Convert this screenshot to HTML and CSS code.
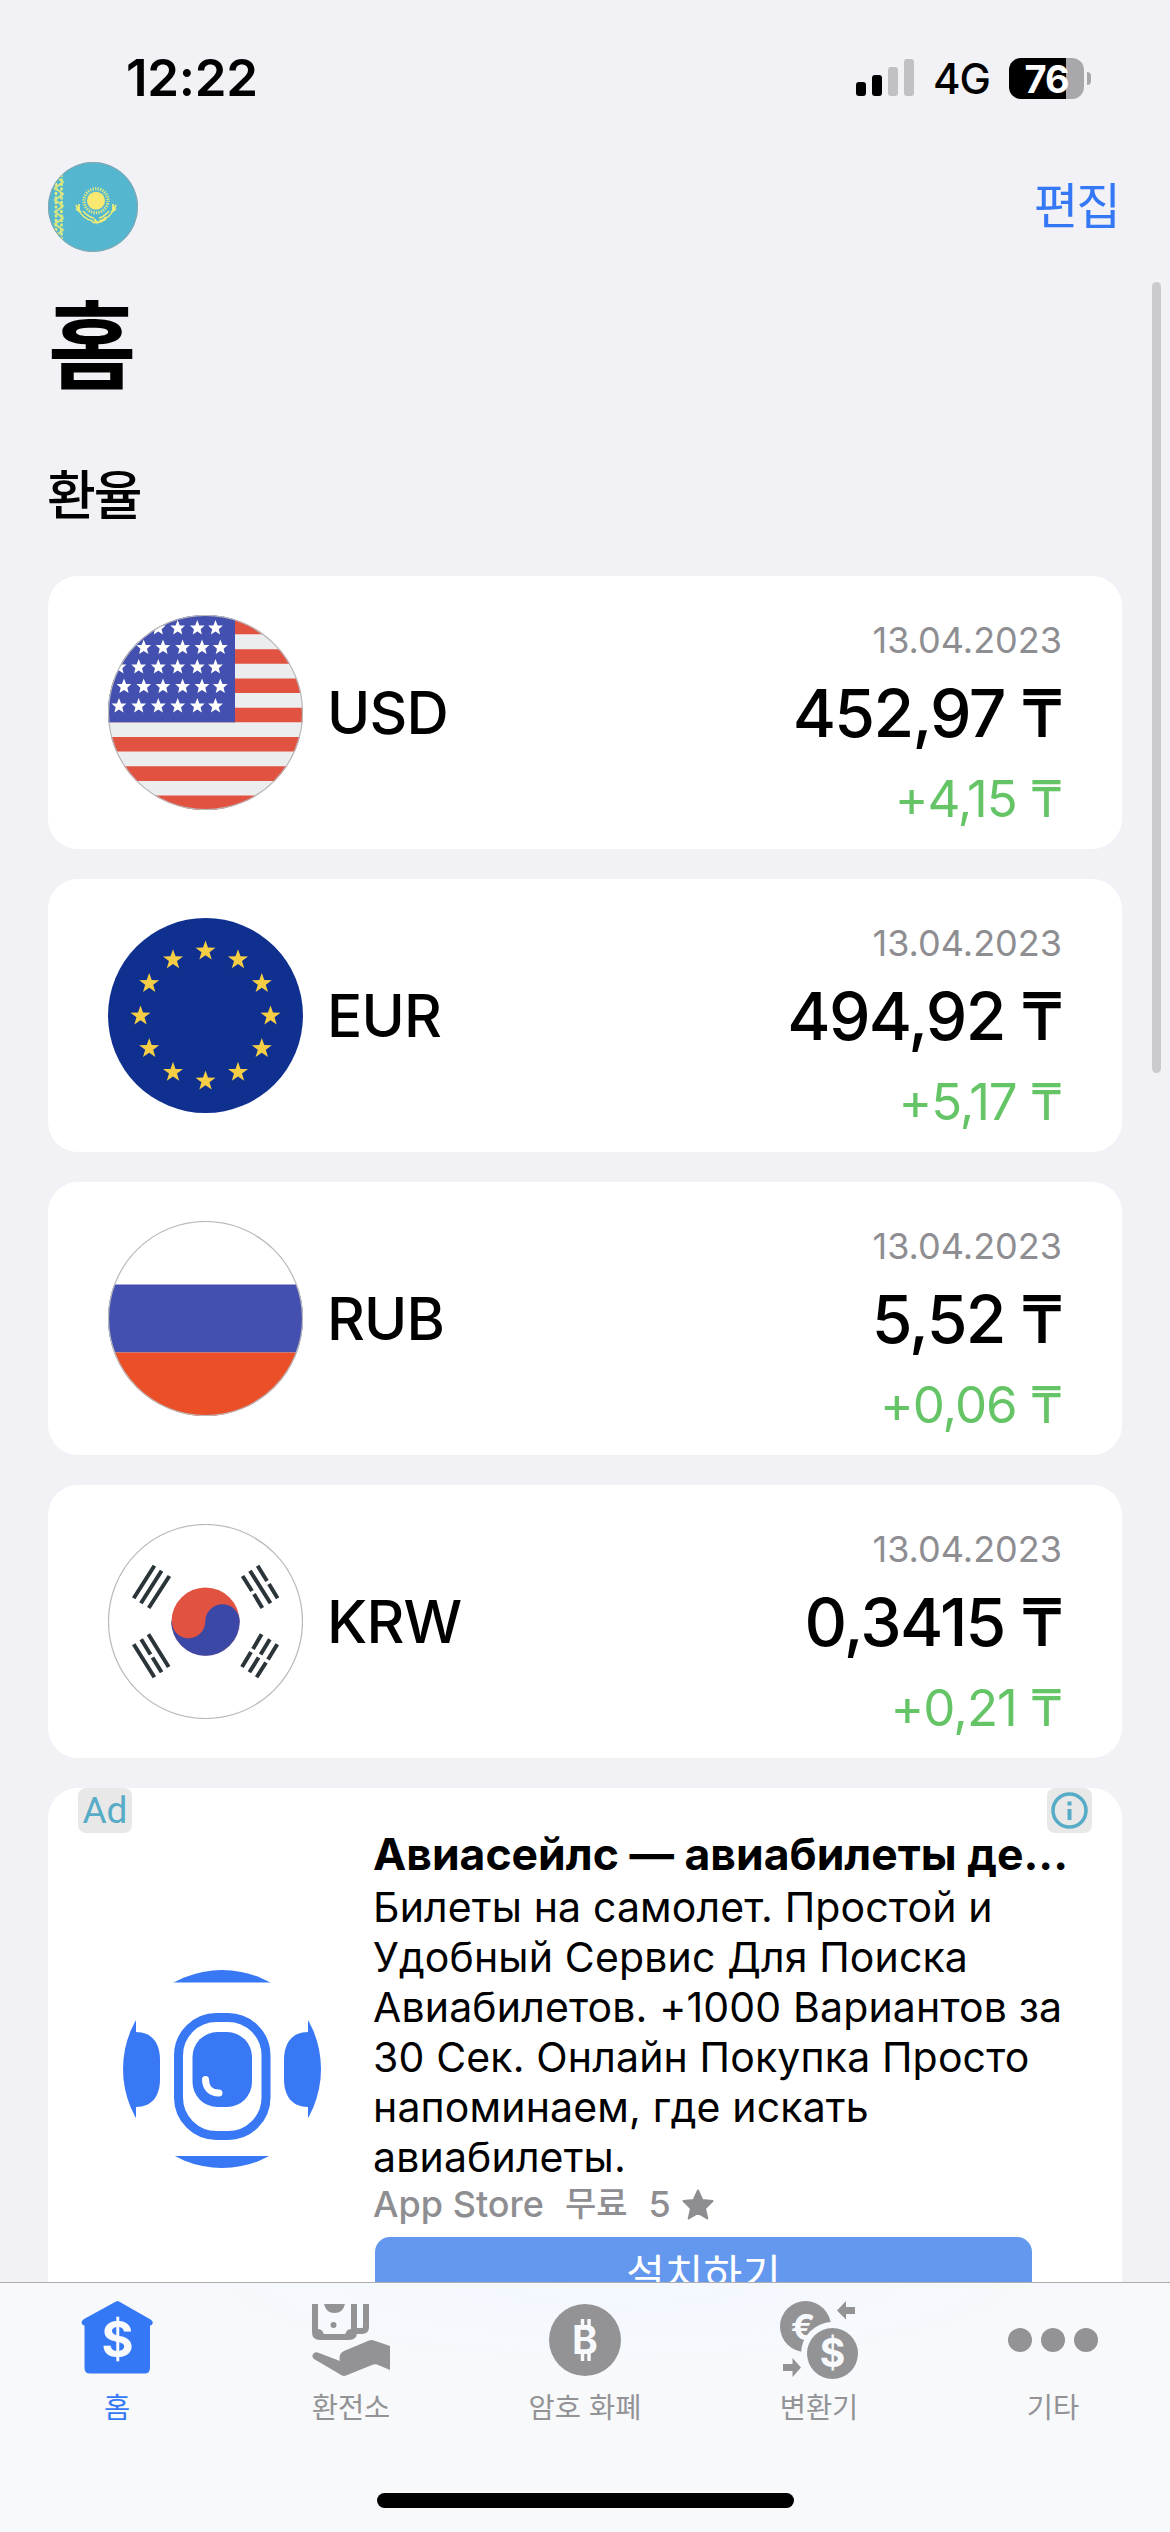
FILE: index.html
```html
<!DOCTYPE html>
<html lang="ko">

<head>
    <meta charset="UTF-8">
    <meta name="viewport" content="width=device-width, initial-scale=1.0">

    <title>홈</title>
    <link rel="stylesheet" href="styles.css">
</head>

<body>
    <!-- Shared shapes -->
    <svg class="defs" width="0" height="0">
        <defs>
            <clipPath id="flagClip"><circle cx="97.5" cy="97.5" r="97.5" /></clipPath>
            <clipPath id="kzClip"><circle cx="45" cy="45" r="45" /></clipPath>
            <clipPath id="adClip"><circle cx="99" cy="99" r="99" /></clipPath>
            <path id="star" d="M0-8 2.1-2.6 7.4-2.4 3.3 1.2 4.6 6.5 0 3.5-4.6 6.5-3.3 1.2-7.4-2.4-2.1-2.6z" />
            <path id="euStar" d="M0-10.5 2.5-3.4 10-3.2 4 1.3 6.2 8.5 0 4.2-6.2 8.5-4 1.3-10-3.2-2.5-3.4z" />
            <g id="starRowA">
                <use href="#star" x="11" /><use href="#star" x="30.7" /><use href="#star" x="50.3" />
                <use href="#star" x="69.7" /><use href="#star" x="89.3" /><use href="#star" x="107.5" />
            </g>
            <g id="starRowB">
                <use href="#star" x="16" /><use href="#star" x="35.7" /><use href="#star" x="55" />
                <use href="#star" x="74.6" /><use href="#star" x="94" /><use href="#star" x="112.3" />
            </g>
        </defs>
    </svg>

    <div class="phone">
        <div class="status-bar">
            <div class="time">12:22</div>
            <div class="status-icons">
                <svg class="signal" width="58" height="38" viewBox="0 0 58 38">
                    <rect x="0" y="23" width="10" height="14" rx="3" />
                    <rect x="16" y="16" width="10" height="21" rx="3" />
                    <rect x="32" y="8" width="10" height="29" rx="3" fill="#c1c0c5" />
                    <rect x="48" y="0" width="10" height="37" rx="3" fill="#c1c0c5" />
                </svg>
                <span class="network">4G</span>
                <div class="battery"><span>76</span></div>
                <div class="battery-tip"></div>
            </div>
        </div>

        <div class="content">
            <div class="header">
                <svg class="avatar" width="90" height="90" viewBox="0 0 90 90">
                    <g clip-path="url(#kzClip)">
                        <rect width="90" height="90" fill="#54b6cf" />
                        <path d="M8 12v66M13.500 12v66" stroke="#e6ec7c" stroke-width="2.500" stroke-dasharray="3 1.500" />
                        <path d="M7 14l8 6-8 6 8 6-8 6 8 6-8 6 8 6-8 6 8 6-8 6 8 6" fill="none" stroke="#d5e583" stroke-width="2" />
                        <circle cx="48" cy="38.700" r="9" fill="#fbe870" />
                        <circle cx="48" cy="38.700" r="12" fill="none" stroke="#dcea86" stroke-width="3.200" stroke-dasharray="1.300 1.210" />
                        <path d="M30 46q4 11 15 13M66 46q-4 11-15 13M35 49q5 6 11 7M61 49q-5 6-10 7" fill="none" stroke="#e9ed78" stroke-width="1.500" />
                        <path d="M28 43l3 6M31 42l0 8M28 47l5 3M68 43l-3 6M65 42l0 8M68 47l-5 3" stroke="#e9ed78" stroke-width="1.800" />
                        <path d="M44 60q6 2 14-3M46 57q4 4 3 5M58 55l-5 5" fill="none" stroke="#f2ec74" stroke-width="1.800" />
                    </g>
                    <circle cx="45" cy="45" r="44.500" fill="none" stroke="#8aa5b0" />
                </svg>
                <a class="edit">편집</a>
            </div>

            <h1>홈</h1>
            <h2>환율</h2>

            <div class="cards">
                <div class="card">
                    <svg width="195" height="195" viewBox="0 0 195 195">
                        <g clip-path="url(#flagClip)">
                            <rect width="195" height="195" fill="#ecedee" />
                            <path d="M0 12h195M0 41.500h195M0 70.700h195M0 100h195M0 129.300h195M0 158.600h195M0 187.900h195" stroke="#e15241" stroke-width="14.600" />
                            <rect width="127" height="107.300" fill="#4350af" />
                            <g fill="#fff">
                                <use href="#starRowA" y="13" />
                                <use href="#starRowB" y="32.500" />
                                <use href="#starRowA" y="52" />
                                <use href="#starRowB" y="71.500" />
                                <use href="#starRowA" y="91" />
                            </g>
                        </g>
                        <circle class="flag-line" cx="97.500" cy="97.500" r="97" />
                    </svg>
                    <div class="code">USD</div>
                    <div class="rate">
                        <div class="date">13.04.2023</div>
                        <div class="value">452,97 ₸</div>
                        <div class="diff">+4,15 ₸</div>
                    </div>
                </div>

                <div class="card">
                    <svg width="195" height="195" viewBox="0 0 195 195">
                        <circle cx="97.500" cy="97.500" r="97.500" fill="#10308f" />
                        <g fill="#f6ce46" transform="translate(97.500 98)">
                            <use href="#euStar" y="-65" />
                            <use href="#euStar" x="32.500" y="-56.300" />
                            <use href="#euStar" x="56.300" y="-32.500" />
                            <use href="#euStar" x="65" />
                            <use href="#euStar" x="56.300" y="32.500" />
                            <use href="#euStar" x="32.500" y="56.300" />
                            <use href="#euStar" y="65" />
                            <use href="#euStar" x="-32.500" y="56.300" />
                            <use href="#euStar" x="-56.300" y="32.500" />
                            <use href="#euStar" x="-65" />
                            <use href="#euStar" x="-56.300" y="-32.500" />
                            <use href="#euStar" x="-32.500" y="-56.300" />
                        </g>
                    </svg>
                    <div class="code">EUR</div>
                    <div class="rate">
                        <div class="date">13.04.2023</div>
                        <div class="value">494,92 ₸</div>
                        <div class="diff">+5,17 ₸</div>
                    </div>
                </div>

                <div class="card">
                    <svg width="195" height="195" viewBox="0 0 195 195">
                        <g clip-path="url(#flagClip)">
                            <rect width="195" height="195" fill="#fff" />
                            <rect y="63.500" width="195" height="68" fill="#4350af" />
                            <rect y="131.500" width="195" height="64" fill="#eb4f27" />
                        </g>
                        <circle class="flag-line" cx="97.500" cy="97.500" r="97" />
                    </svg>
                    <div class="code">RUB</div>
                    <div class="rate">
                        <div class="date">13.04.2023</div>
                        <div class="value">5,52 ₸</div>
                        <div class="diff">+0,06 ₸</div>
                    </div>
                </div>

                <div class="card">
                    <svg width="195" height="195" viewBox="0 0 195 195">
                        <circle cx="97.500" cy="97.500" r="34" fill="#e15241" />
                        <path d="M63.500 97.500A34 34 0 0 0 131.500 97.500A17 17 0 0 0 97.500 97.500A17 17 0 0 1 63.500 97.500z" fill="#3c48a6" stroke="#3c48a6" stroke-width=".5" />
                        <g fill="none" stroke="#2b3439" stroke-width="4">
                            <path d="M46.400 41.700 25.700 74.300M53.600 46.700 32.900 79.300M61.400 52 40.700 84" />
                            <path d="M142 46.700 162.500 79.300M25.700 120.300 46.400 153.300M40.400 110.300 60.700 143" />
                            <path d="M149.600 41.700 159 57M161 60 169.600 74.300M134.600 52 144 67M146 70 154.300 84" />
                            <path d="M33.200 115.300 42.500 130.500M44.500 133.500 53.600 148.300" />
                            <path d="M153.600 110.300 145 125M143 128 134 143M161.800 115.300 152.600 130.500M150.600 133.500 141.400 148.300M169.300 120.300 160 135.500M158 138.500 148.600 153.300" />
                        </g>
                        <circle class="flag-line" cx="97.500" cy="97.500" r="97" />
                    </svg>
                    <div class="code">KRW</div>
                    <div class="rate">
                        <div class="date">13.04.2023</div>
                        <div class="value">0,3415 ₸</div>
                        <div class="diff">+0,21 ₸</div>
                    </div>
                </div>

                <div class="ad">
                    <div class="ad-badge">Ad</div>
                    <div class="ad-info">
                        <svg width="45" height="45" viewBox="0 0 45 45">
                            <circle cx="22.500" cy="22.500" r="16.500" fill="none" stroke="#56abc6" stroke-width="3.500" />
                            <path d="M22.500 13.500v4M22.500 21v11" stroke="#56abc6" stroke-width="4" />
                        </svg>
                    </div>
                    <svg class="ad-icon" width="198" height="198" viewBox="0 0 198 198">
                        <g clip-path="url(#adClip)" fill="#3878f4">
                            <path d="M0 0h198v12.500H0zM0 186h198v12H0z" />
                            <path d="M0 40h13v22c16 0 24 11 24 28v19c0 17-8 28-24 28v22H0zM198 40h-13v22c-16 0-24 11-24 28v19c0 17 8 28 24 28v22h13z" />
                        </g>
                        <rect x="55.500" y="47.500" width="87.500" height="118" rx="38" fill="none" stroke="#3878f4" stroke-width="9" />
                        <rect x="69.500" y="62" width="59.500" height="75" rx="25" fill="#3878f4" />
                        <path d="M82.500 109.500c0 8 5 13.500 13.500 13.500" fill="none" stroke="#fff" stroke-width="7" stroke-linecap="round" />
                    </svg>
                    <div class="ad-text">
                        <div class="ad-title">Авиасейлс — авиабилеты де...</div>
                        <p>Билеты на самолет. Простой и<br>Удобный Сервис Для Поиска<br>Авиабилетов. +1000 Вариантов за<br>30 Сек. Онлайн Покупка Просто<br>напоминаем, где искать<br>авиабилеты.</p>
                        <div class="ad-meta">
                            <span>App Store</span>
                            <span class="price">무료</span>
                            <span>5</span>
                            <svg width="32" height="31" viewBox="0 0 32 31">
                                <path d="M16 1.500 20.300 11 30.500 12 23 19.500 25.300 29.500 16 24 6.700 29.500 9 19.500 1.500 12 11.700 11z" fill="#8e8e92" stroke="#8e8e92" stroke-width="2" stroke-linejoin="round" />
                            </svg>
                        </div>
                        <div class="install">설치하기</div>
                    </div>
                </div>
            </div>
        </div>

        <div class="tab-bar">
            <div class="tabs">
                <div class="tab active">
                    <svg width="78" height="78" viewBox="0 0 78 78">
                        <path d="M38 .5q1.500-.8 3 0l32 18.300q2.500 2 1.500 4-1 2-2.500 1.700V67q0 5.500-5.500 5.500H12Q6.500 72.500 6.500 67V24.500Q4.500 24.500 3.700 22.300 3 20 6 18z" />
                        <text class="glyph" x="39.500" y="56" font-size="49">$</text>
                    </svg>
                    <span>홈</span>
                </div>
                <div class="tab">
                    <svg width="78" height="78" viewBox="0 0 78 78">
                        <g fill="none" stroke="#939396" stroke-width="6">
                            <path d="M3 3v28q0 5 5 5h29q5 0 5-5V3" />
                            <path d="M54 3v23q0 4-4 4h-7" />
                        </g>
                        <path d="M4 28q8-1 8 8H5zM41 28q-8-1-8 8h7zM12 3h21q-2 9-10.500 9T12 3z" />
                        <circle cx="21.500" cy="24" r="3" />
                        <path d="M7 52 28 60Q26 53 32 50L57 39.500Q59.500 38.500 62 39.500L78 45V69L65 63.500Q62.500 63 60 64L34 74.500Q32 75.300 30 74.500L2 58Q-1 55 1.500 52.500 4 50.500 7 52z" />
                    </svg>
                    <span>환전소</span>
                </div>
                <div class="tab">
                    <svg width="78" height="78" viewBox="0 0 78 78">
                        <circle cx="39" cy="39" r="36" />
                        <text class="glyph" x="39" y="53" font-size="39">B</text>
                        <path d="M36.500 18v8M43 18v8M36.500 52v8M43 52v8" stroke="#f7f9fd" stroke-width="3.500" />
                    </svg>
                    <span>암호 화폐</span>
                </div>
                <div class="tab">
                    <svg width="78" height="78" viewBox="0 0 78 78">
                        <circle cx="25.500" cy="25.500" r="25.500" />
                        <text class="glyph" x="23" y="39" font-size="36">€</text>
                        <circle cx="52.500" cy="52.500" r="31.500" fill="#f6f9fe" />
                        <circle cx="52.500" cy="52.500" r="25.500" />
                        <text class="glyph" x="52.500" y="66" font-size="39">$</text>
                        <path d="M57 9.500 66 0v6h9v7h-9v5.500zM21 66.500 12.500 57v6H3v7h9.500v6z" />
                    </svg>
                    <span>변환기</span>
                </div>
                <div class="tab">
                    <svg width="96" height="78" viewBox="0 0 96 78">
                        <circle cx="15" cy="39" r="12" />
                        <circle cx="48" cy="39" r="12" />
                        <circle cx="81" cy="39" r="12" />
                    </svg>
                    <span>기타</span>
                </div>
            </div>
            <div class="home-indicator"></div>
        </div>

        <div class="scrollbar"></div>
    </div>
</body>

</html>
```
FILE: styles.css
```css
* {
    box-sizing: border-box;
}

body {
    margin: 0;
    background-color: #f1f1f6;
    font-family: Inter, "Noto Sans CJK KR", sans-serif;
    color: #000;
}

svg {
    display: block;
    flex-shrink: 0;
}

.defs {
    position: absolute;
}

.phone {
    position: relative;
    display: flex;
    flex-direction: column;
    width: 1170px;
    height: 2532px;
    overflow: hidden;
}

/* Status bar */
.status-bar {
    display: flex;
    justify-content: space-between;
    height: 162px;
    flex-shrink: 0;
    padding: 47px 79px 0 126px;
}

.time {
    font-size: 51px;
    font-weight: 600;
    line-height: 62px;
    letter-spacing: -0.3px;
}

.status-icons {
    display: flex;
    align-items: center;
    height: 62px;
}

.network {
    margin-left: 19px;
    width: 58px;
    font-size: 42px;
    font-weight: 500;
    line-height: 62px;
    padding-top: 2px;
    letter-spacing: -1px;
}

.battery {
    width: 75px;
    height: 41px;
    margin-left: 18px;
    border-radius: 12px;
    background: linear-gradient(to right, #000 57px, #a8a7ac 57px);
    color: #fff;
    font-size: 38px;
    font-weight: 700;
    line-height: 42px;
    text-align: center;
    letter-spacing: -1px;
}

.battery-tip {
    width: 4px;
    height: 13px;
    margin-left: 3px;
    border-radius: 0 4px 4px 0;
    background-color: #a8a7ac;
}

/* Content */
.content {
    flex: 1;
    min-height: 0;
    overflow: hidden;
    padding: 0 48px;
}

.header {
    display: flex;
    justify-content: space-between;
    align-items: center;
    height: 90px;
}

.edit {
    margin-right: 3px;
    color: #3478f6;
    font-size: 48.500px;
    line-height: 60px;
    letter-spacing: -2px;
}

h1 {
    margin: 0;
    padding-top: 4px;
    font-size: 96px;
    font-weight: 700;
    line-height: 180px;
}

h2 {
    margin: 0 0 20px -1px;
    font-size: 53px;
    font-weight: 500;
    line-height: 120px;
    letter-spacing: -2px;
}

.cards {
    display: flex;
    flex-direction: column;
    gap: 30px;
}

.card {
    display: flex;
    align-items: center;
    height: 273px;
    padding: 0 60px;
    border-radius: 30px;
    background-color: #fff;
}

.flag-line {
    fill: none;
    stroke: #b9b9bb;
    stroke-width: 1.2;
}

.code {
    flex: 1;
    margin-left: 24px;
    font-size: 58.500px;
    font-weight: 500;
    letter-spacing: -0.8px;
}

.rate {
    padding-top: 26px;
    text-align: right;
}

.date {
    color: #8e8e92;
    font-size: 36px;
    line-height: 44px;
}

.value {
    font-size: 66px;
    font-weight: 500;
    line-height: 102px;
    letter-spacing: -1.7px;
}

.diff {
    color: #65c466;
    font-size: 51px;
    line-height: 69px;
    letter-spacing: -1px;
}

/* Ad */
.ad {
    position: relative;
    display: flex;
    height: 600px;
    padding-left: 75px;
    border-radius: 30px;
    background-color: #fff;
}

.ad-badge,
.ad-info {
    position: absolute;
    top: 0;
    height: 45px;
    border-radius: 8px;
    background-color: #e8e8e8;
}

.ad-badge {
    left: 30px;
    width: 54px;
    color: #56abc6;
    font-family: Roboto, sans-serif;
    font-size: 37px;
    line-height: 46px;
    text-align: center;
}

.ad-info {
    right: 30px;
    width: 45px;
}

.ad-icon {
    margin-top: 182px;
}

.ad-text {
    margin-left: 52px;
    padding-top: 38px;
    white-space: nowrap;
}

.ad-title {
    font-size: 44.500px;
    font-weight: 700;
    line-height: 56px;
}

.ad-text p {
    margin: 0;
    font-size: 41px;
    line-height: 50px;
    letter-spacing: 0.15px;
}

.ad-meta {
    display: flex;
    align-items: center;
    height: 44px;
    color: #8e8e92;
    font-size: 36px;
    font-weight: 500;
    line-height: 44px;
}

.ad-meta .price {
    margin: 0 21px;
    font-size: 34px;
}

.ad-meta svg {
    margin-left: 11px;
}

.install {
    width: 657px;
    height: 100px;
    margin: 11px 0 0 2px;
    border-radius: 15px;
    background-color: #6398ee;
    color: #fff;
    font-size: 42px;
    line-height: 76px;
    text-align: center;
}

/* Tab bar */
.tab-bar {
    height: 250px;
    flex-shrink: 0;
    border-top: 1px solid #adadb0;
    background: radial-gradient(ellipse 560px 110px at 53% 0, #f3f8ff, #f8f9fb);
}

.tabs {
    display: flex;
    height: 210px;
    padding-top: 18px;
}

.tab {
    display: flex;
    flex-direction: column;
    align-items: center;
    width: 234px;
    color: #939396;
    fill: #939396;
    font-size: 28.500px;
    font-weight: 400;
    line-height: 40px;
}

.tab span {
    margin-top: 9px;
}

.tab.active {
    color: #3478f6;
    fill: #3478f6;
}

.glyph {
    fill: #f7f9fd;
    font-weight: 700;
    text-anchor: middle;
}

.home-indicator {
    width: 417px;
    height: 15px;
    margin: 0 auto;
    border-radius: 8px;
    background-color: #000;
}

/* Floats over the list */
.scrollbar {
    position: absolute;
    top: 282px;
    right: 9px;
    width: 9px;
    height: 791px;
    border-radius: 5px;
    background-color: #cbcacf;
}
```
